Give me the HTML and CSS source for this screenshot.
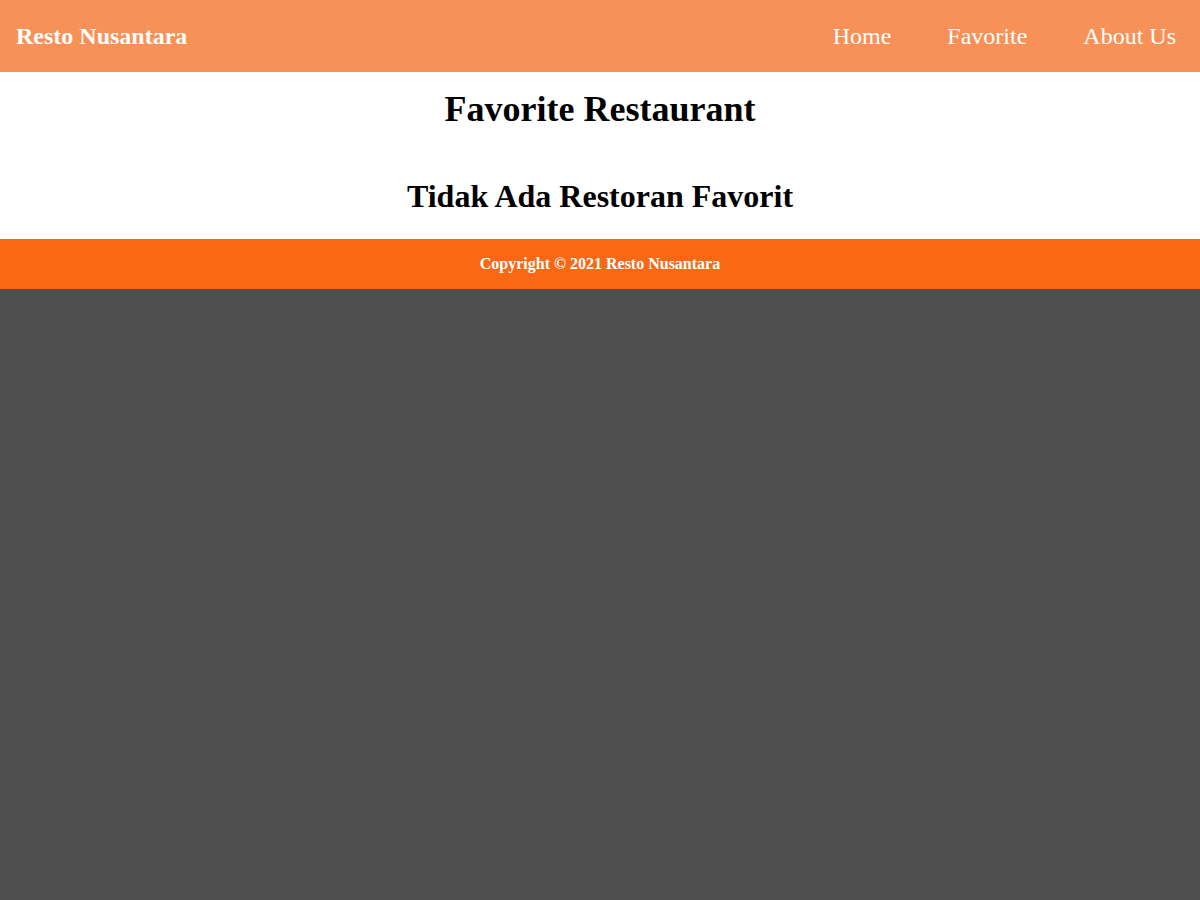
FILE: index.html
```html
<!DOCTYPE html>
<html lang="id">
<head>
<meta charset="utf-8">
<title>Resto Nusantara</title>
<link rel="stylesheet" href="styles.css">
</head>
<body>
<header class="app-bar">
  <a class="brand" href="#">Resto Nusantara</a>
  <nav class="nav">
    <a href="#">Home</a>
    <a href="#">Favorite</a>
    <a href="#">About Us</a>
  </nav>
</header>
<main class="content">
  <h1 class="page-title">Favorite Restaurant</h1>
  <h2 class="empty">Tidak Ada Restoran Favorit</h2>
</main>
<footer class="footer">
  <p>Copyright © 2021 Resto Nusantara</p>
</footer>
</body>
</html>
```
FILE: styles.css
```css
html, body {
  margin: 0;
  padding: 0;
}
body {
  background: #4e4e4e;
  font-family: "Liberation Serif", "Times New Roman", serif;
  color: #000;
}
.app-bar {
  height: 72px;
  background: #f89157;
  display: flex;
  align-items: center;
  justify-content: space-between;
  padding: 0 24px 0 16px;
}
.brand {
  color: #fff;
  text-decoration: none;
  font-weight: bold;
  font-size: 24px;
}
.nav {
  display: flex;
  gap: 56px;
}
.nav a {
  color: #fff;
  text-decoration: none;
  font-size: 24px;
}
.content {
  background: #fff;
  text-align: center;
  padding: 1px 0;
}
.page-title {
  font-size: 36px;
  margin: 15px 0 0;
}
.empty {
  font-size: 32px;
  margin: 48px 0 23px;
}
.footer {
  background: #f96815;
  height: 50px;
  display: flex;
  align-items: center;
  justify-content: center;
}
.footer p {
  margin: 0;
  color: #fff;
  font-weight: bold;
  font-size: 16px;
}
```
